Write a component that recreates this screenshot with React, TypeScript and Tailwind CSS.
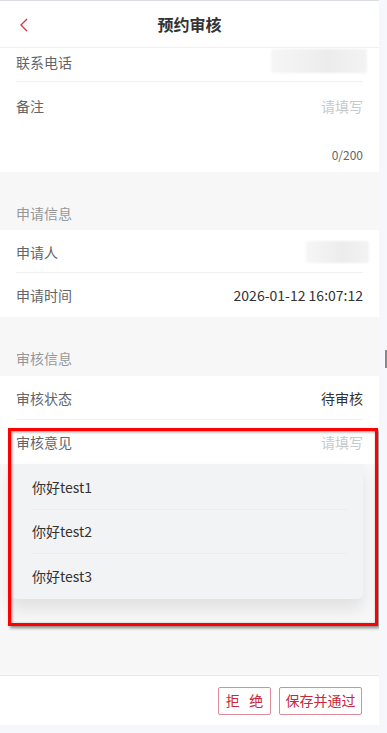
import React from 'react';

const font = { fontFamily: '"Noto Sans CJK SC", "Noto Sans", sans-serif' };

function Cell({ label, children, border = true }: { label: string; children?: React.ReactNode; border?: boolean }) {
  return (
    <div className="relative flex h-[44px] items-center justify-between bg-white px-4">
      <span className="text-[14px] leading-6 text-[#646566]">{label}</span>
      <div className="text-[14px] leading-6 text-[#323233]">{children}</div>
      {border && <div className="absolute bottom-0 left-4 right-4 h-px bg-[#f1f1f3]" />}
    </div>
  );
}

function Blur({ className }: { className: string }) {
  return (
    <div
      className={`rounded-[2px] bg-[linear-gradient(90deg,#f6f6f6,#ececec_60%,#f3f3f3)] blur-[1px] ${className}`}
    />
  );
}

export default function App() {
  const options = ['你好test1', '你好test2', '你好test3'];

  return (
    <div className="flex h-[733px] w-[387px] bg-[#f5f7fc]" style={font}>
      <div className="relative flex h-[725px] w-[379px] flex-col overflow-hidden bg-[#f7f7f8]">
        {/* Header */}
        <div className="relative flex h-[48px] shrink-0 items-center justify-center border-b border-[#f1f1f3] border-t border-t-[#dcdce4] bg-white">
          <svg className="absolute left-[19px] top-[17px]" width="10" height="14" viewBox="0 0 10 14">
            <polyline points="8,1 2,7 8,13" fill="none" stroke="#d23b4c" strokeWidth="1.4" />
          </svg>
          <span className="text-[16px] font-bold text-[#323233]">预约审核</span>
        </div>

        {/* 联系电话 (partly scrolled under header) */}
        <div className="relative flex h-[34px] items-start justify-between bg-white px-4 pt-[2px]">
          <span className="text-[14px] leading-6 text-[#646566]">联系电话</span>
          <Blur className="-mr-1 mt-[-1px] h-[24px] w-[96px]" />
          <div className="absolute bottom-0 left-4 right-4 h-px bg-[#f1f1f3]" />
        </div>

        {/* 备注 */}
        <div className="bg-white px-4 pb-[7px] pt-[12px]">
          <div className="flex items-center justify-between">
            <span className="text-[14px] leading-6 text-[#646566]">备注</span>
            <span className="text-[14px] leading-6 text-[#c8c9cc]">请填写</span>
          </div>
          <div className="mt-[27px] text-right text-[12px] leading-5 text-[#646566]">0/200</div>
        </div>

        {/* 申请信息 */}
        <div className="flex h-[58px] items-end px-4 pb-[7px]">
          <span className="text-[14px] leading-5 text-[#969799]">申请信息</span>
        </div>
        <div className="relative flex h-[43px] items-center justify-between bg-white px-4">
          <span className="text-[14px] leading-6 text-[#646566]">申请人</span>
          <Blur className="-mr-[6px] h-[22px] w-[63px]" />
          <div className="absolute bottom-0 left-4 right-4 h-px bg-[#f1f1f3]" />
        </div>
        <Cell label="申请时间" border={false}>
          2026-01-12 16:07:12
        </Cell>

        {/* 审核信息 */}
        <div className="flex h-[59px] items-end px-4 pb-[8px]">
          <span className="text-[14px] leading-5 text-[#969799]">审核信息</span>
        </div>
        <Cell label="审核状态">待审核</Cell>
        <Cell label="审核意见" border={false}>
          <span className="text-[#c8c9cc]">请填写</span>
        </Cell>

        <div className="flex-1" />

        {/* Footer */}
        <div className="flex h-[50px] shrink-0 items-center justify-end gap-2 border-t border-[#e8e8ea] bg-white pr-[17px]">
          <button className="h-[28px] w-[53px] rounded-[2px] border border-[#dc8c98] text-[14px] text-[#c8283b]">
            拒&nbsp;&nbsp;&nbsp;绝
          </button>
          <button className="h-[28px] w-[83px] rounded-[2px] border border-[#dc8c98] text-[14px] text-[#c8283b]">
            保存并通过
          </button>
        </div>

        {/* Dropdown options */}
        <div className="absolute left-[10px] top-[464px] w-[353px] rounded-b-[6px] bg-[#f2f3f5] pt-px shadow-[0_10px_16px_rgba(0,0,0,0.09)]">
          {options.map((o, i) => (
            <div key={o} className="relative flex h-[44.5px] items-center px-[22px]">
              <span className="text-[14px] text-[#323233]">{o}</span>
              {i < options.length - 1 && (
                <div className="absolute bottom-0 left-[21px] right-[16px] h-px bg-[#ebecef]" />
              )}
            </div>
          ))}
        </div>

        {/* Annotation frame */}
        <div className="pointer-events-none absolute left-[8px] top-[428px] h-[198px] w-[370px] border-[3px] border-[#ff0000] shadow-[2px_2px_3px_rgba(0,0,0,0.45),inset_1px_1px_3px_rgba(0,0,0,0.45)]" />
      </div>

      {/* Scrollbar strip */}
      <div className="relative w-[8px]">
        <div className="absolute right-0 top-[350px] h-[18px] w-[2px] bg-[#8a8a8a]" />
      </div>
    </div>
  );
}
